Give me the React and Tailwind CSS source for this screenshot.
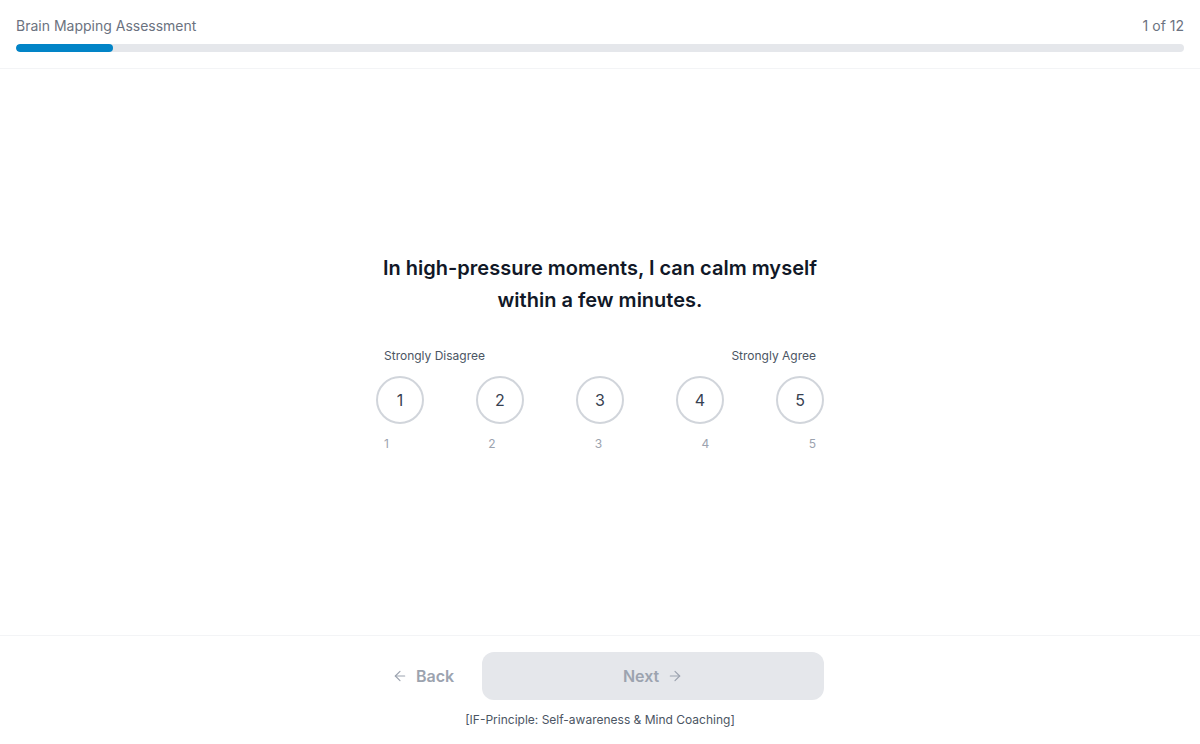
import { ArrowLeft, ArrowRight } from "lucide-react"

const options = [1, 2, 3, 4, 5]

const App = () => {
    return (
        <div className="h-[744px] flex flex-col bg-white font-['Inter',sans-serif]">
            <header className="px-4 pt-4 pb-4 border-b border-[#f3f4f6]">
                <div className="flex items-center justify-between text-sm text-[#6b7280]">
                    <span>Brain Mapping Assessment</span>
                    <span>1 of 12</span>
                </div>
                <div className="mt-2 h-2 rounded-full bg-[#e5e7eb] overflow-hidden">
                    <div className="h-full rounded-full bg-[#0284c7]" style={{ width: `${(1 / 12) * 100}%` }} />
                </div>
            </header>

            <main className="flex-1 flex items-center justify-center">
                <div className="w-[448px]">
                    <h2 className="text-xl leading-8 font-semibold text-[#111827] text-center">
                        In high-pressure moments, I can calm myself within a few minutes.
                    </h2>
                    <div className="mt-8 flex justify-between px-2 text-xs text-[#4b5563]">
                        <span>Strongly Disagree</span>
                        <span>Strongly Agree</span>
                    </div>
                    <div className="mt-3 flex justify-between">
                        {options.map(n => (
                            <button
                                key={n}
                                className="w-12 h-12 rounded-full border-2 border-[#d1d5db] flex items-center justify-center text-base text-[#374151]"
                            >
                                {n}
                            </button>
                        ))}
                    </div>
                    <div className="mt-3 flex justify-between px-2 text-xs text-[#9ca3af]">
                        {options.map(n => (
                            <span key={n}>{n}</span>
                        ))}
                    </div>
                </div>
            </main>

            <footer className="border-t border-[#f3f4f6] pt-4 pb-4">
                <div className="w-[448px] mx-auto">
                    <div className="flex items-center gap-3">
                        <button className="flex items-center gap-2 px-4 h-12 text-base font-semibold text-[#9ca3af]">
                            <ArrowLeft size={16} strokeWidth={1.75} />
                            Back
                        </button>
                        <button className="flex-1 h-12 rounded-xl bg-[#e5e7eb] flex items-center justify-center gap-2 text-base font-semibold text-[#9ca3af]">
                            Next
                            <ArrowRight size={16} strokeWidth={1.75} />
                        </button>
                    </div>
                    <p className="mt-3 text-xs text-center text-[#4b5563]">
                        [IF-Principle: Self-awareness &amp; Mind Coaching]
                    </p>
                </div>
            </footer>
        </div>
    )
}

export default App
